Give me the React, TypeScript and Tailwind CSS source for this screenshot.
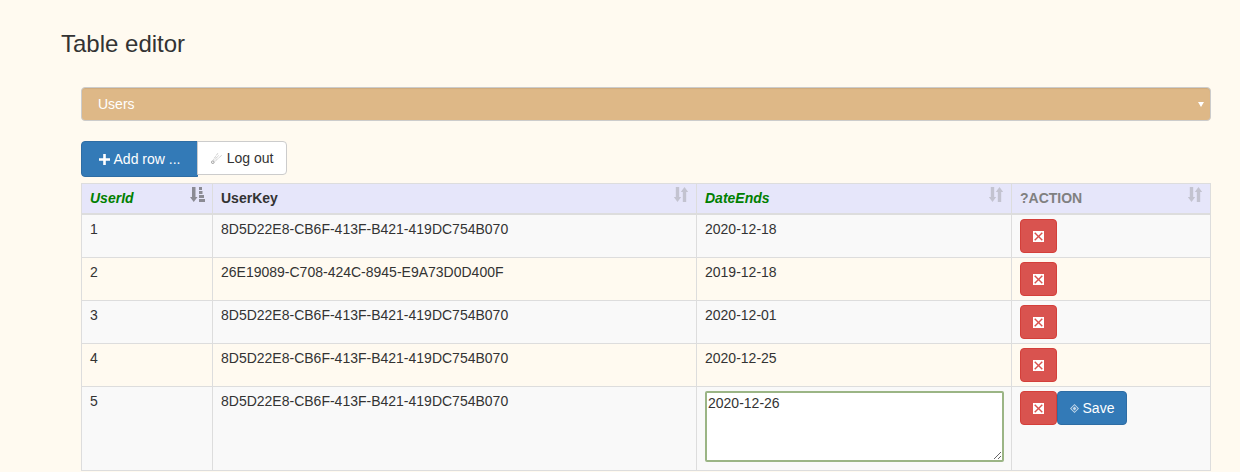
const rows = [
  ["1", "8D5D22E8-CB6F-413F-B421-419DC754B070", "2020-12-18"],
  ["2", "26E19089-C708-424C-8945-E9A73D0D400F", "2019-12-18"],
  ["3", "8D5D22E8-CB6F-413F-B421-419DC754B070", "2020-12-01"],
  ["4", "8D5D22E8-CB6F-413F-B421-419DC754B070", "2020-12-25"],
];

function SortBoth() {
  return (
    <svg className="absolute right-[8px] top-[3px] text-[#c3c3d0]" width="14" height="15" viewBox="0 0 14 15" fill="currentColor">
      <path d="M1.800 0h3.400v10h2l-3.700 5L-.2 10h2z" />
      <path d="M8.800 15h3.400V5h2L10.500 0 6.800 5h2z" />
    </svg>
  );
}

function SortAsc() {
  return (
    <svg className="absolute right-[7px] top-[3px] text-[#8b8b94]" width="15" height="15" viewBox="0 0 15 15" fill="currentColor">
      <path d="M2 0h3.500v10h2l-3.750 5L0 10h2z" />
      <path d="M9 0h3v3H9zM9 4h3.500v3H9zM9 8h5v3H9zM9 12h6v3H9z" />
    </svg>
  );
}

function CrossIcon() {
  return (
    <svg className="mx-auto block" width="11" height="11" viewBox="0 0 11 11" fill="white">
      <path
        fillRule="evenodd"
        d="M0 0h11v11H0zM2.200 1.200 1.200 2.200 4.500 5.500 1.200 8.800l1 1L5.500 6.500l3.300 3.300 1-1L6.500 5.500l3.300-3.300-1-1L5.500 4.500z"
      />
    </svg>
  );
}

function DeleteButton() {
  return (
    <button className="block h-[34px] w-[37px] rounded-[4px] border border-[#d43f3a] bg-[#d9534f]">
      <CrossIcon />
    </button>
  );
}

function CometIcon() {
  return (
    <svg width="12" height="12" viewBox="0 0 12 12" fill="none" stroke="#a8a8a8" strokeWidth="0.8" strokeDasharray="1 0.8">
      <circle cx="1.800" cy="10.200" r="1.300" strokeDasharray="none" stroke="#888" />
      <path d="M3 8.500 8 3M3.800 9.500 11 3M2.500 7.500 7 1" />
    </svg>
  );
}

function DiamondIcon() {
  return (
    <svg width="9" height="9" viewBox="0 0 9 9" fill="#c4d8ea">
      <path fillRule="evenodd" d="M4.500 0 9 4.500 4.500 9 0 4.500zM4.500 1.300 1.300 4.500l3.200 3.200 3.200-3.200z" />
      <path d="M4.500 2.600 6.400 4.500 4.500 6.400 2.600 4.500z" />
    </svg>
  );
}

const cell = "border border-[#ddd] px-[8px] pt-[4px] pb-[4px] align-top leading-[20px]";
const head = "relative border border-b-2 border-[#ddd] px-[8px] pt-[4px] pb-[5px] text-left align-bottom font-bold leading-[20px]";

export default function App() {
  return (
    <div className="h-screen overflow-hidden bg-[#fffaf0] font-['Liberation_Sans',sans-serif] text-[14px] text-[#333]">
      <h2 className="pl-[61px] pt-[30px] text-[24px] leading-[27px] font-normal">Table editor</h2>
      <div className="mr-[29px] ml-[81px] mt-[30px]">
        <div className="flex h-[34px] items-center justify-between rounded-[4px] border border-[#ccc] bg-[#deb887] pr-[6px] pl-[16px] text-white shadow-[inset_0_1px_1px_rgba(0,0,0,0.075)]">
          <span>Users</span>
          <svg width="6" height="6" viewBox="0 0 6 6" fill="white"><path d="M0 1h6L3 6z" /></svg>
        </div>
        <div className="mt-[20px] flex items-start">
          <button className="flex h-[36px] w-[117px] items-center justify-center gap-[4px] rounded-l-[4px] border border-[#2e6da4] bg-[#337ab7] text-white">
            <svg width="11" height="11" viewBox="0 0 11 11" fill="white"><path d="M4.200 0h2.600v4.200H11v2.600H6.800V11H4.200V6.800H0V4.200h4.200z" /></svg>
            <span>Add row ...</span>
          </button>
          <button className="relative -ml-px flex h-[34px] w-[90px] items-center justify-center gap-[4px] rounded-r-[4px] border border-[#ccc] bg-white text-[#333]">
            <CometIcon />
            <span>Log out</span>
          </button>
        </div>
        <table className="mt-[6px] w-[1129px] table-fixed border-collapse">
          <colgroup>
            <col className="w-[131px]" />
            <col className="w-[484px]" />
            <col className="w-[315px]" />
            <col className="w-[199px]" />
          </colgroup>
          <thead>
            <tr className="bg-[#e6e6fa]">
              <th className={head + " italic text-[#008000]"}>UserId<SortAsc /></th>
              <th className={head}>UserKey<SortBoth /></th>
              <th className={head + " italic text-[#008000]"}>DateEnds<SortBoth /></th>
              <th className={head + " text-[#808080]"}>?ACTION<SortBoth /></th>
            </tr>
          </thead>
          <tbody>
            {rows.map((r, i) => (
              <tr key={r[0]} className={i % 2 === 0 ? "h-[43px] bg-[#f9f9f9]" : "h-[43px]"}>
                <td className={cell}>{r[0]}</td>
                <td className={cell}>{r[1]}</td>
                <td className={cell}>{r[2]}</td>
                <td className={cell}><DeleteButton /></td>
              </tr>
            ))}
            <tr className="h-[84px] bg-[#f9f9f9]">
              <td className={cell}>5</td>
              <td className={cell}>8D5D22E8-CB6F-413F-B421-419DC754B070</td>
              <td className={cell}>
                <textarea
                  readOnly
                  value="2020-12-26"
                  className="block h-[71px] w-[299px] rounded-[2px] border-2 border-[#9bb585] bg-white px-[1px] py-0 leading-[20px] text-[#333] outline-none"
                />
              </td>
              <td className={cell}>
                <div className="flex">
                  <DeleteButton />
                  <button className="flex h-[34px] w-[70px] items-center justify-center gap-[4px] rounded-[4px] border border-[#2e6da4] bg-[#337ab7] text-white">
                    <DiamondIcon />
                    <span>Save</span>
                  </button>
                </div>
              </td>
            </tr>
          </tbody>
        </table>
      </div>
    </div>
  );
}
